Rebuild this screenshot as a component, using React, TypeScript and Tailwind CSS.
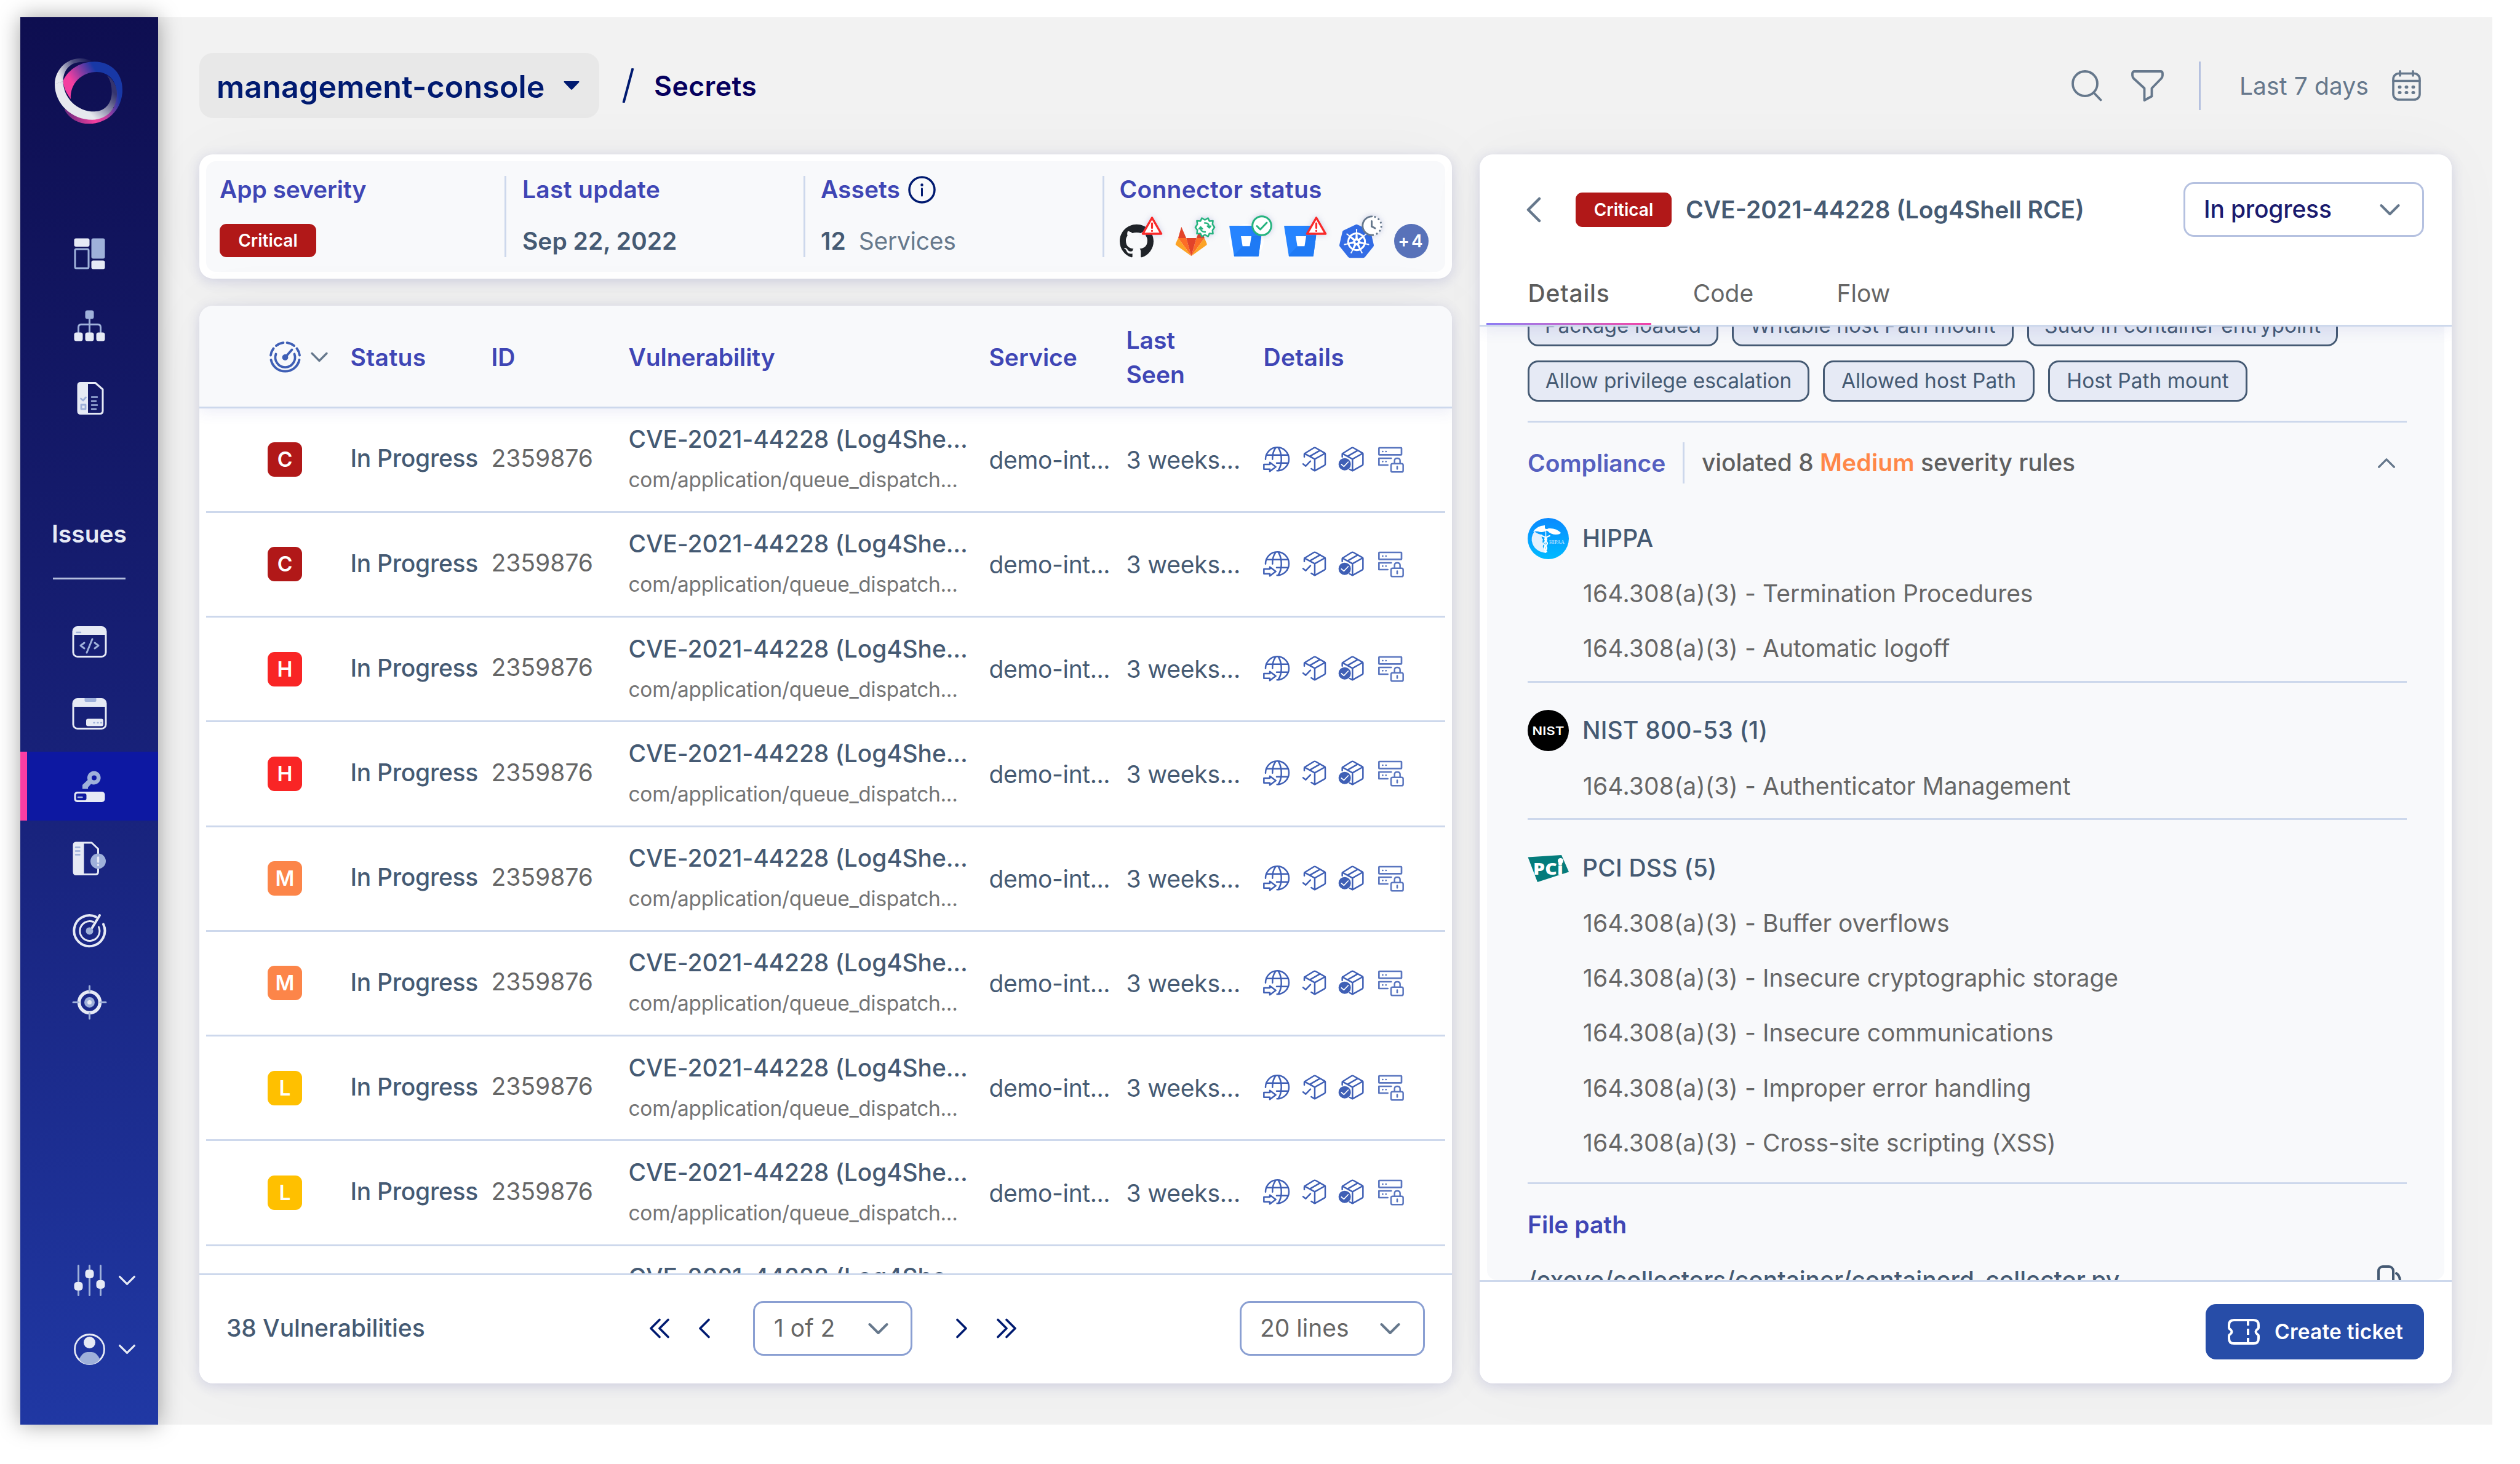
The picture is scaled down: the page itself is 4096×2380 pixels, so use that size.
import type { ReactNode } from "react";
import { SiGithub, SiKubernetes } from "react-icons/si";

const LIGHT = "#e6eaf5";
const SOFT = "#9fb1da";

/* ---------- Sidebar icons ---------- */

const Logo = () => (
  <svg className="w-[110px] h-[106px] -ml-[2px]" viewBox="57 44 330 318" fill="none">
    <defs>
      <linearGradient id="lgTop" gradientUnits="userSpaceOnUse" x1="125" y1="160" x2="250" y2="90">
        <stop offset="0.1" stopColor="#f43fa0" />
        <stop offset="1" stopColor="#1838a6" />
      </linearGradient>
      <linearGradient id="lgBottom" gradientUnits="userSpaceOnUse" x1="105" y1="300" x2="375" y2="250">
        <stop offset="0" stopColor="#6b2a80" />
        <stop offset="0.5" stopColor="#f43fa0" />
        <stop offset="0.7" stopColor="#c83f9f" />
        <stop offset="1" stopColor="#1838a6" />
      </linearGradient>
      <linearGradient id="lgWhiteTop" gradientUnits="userSpaceOnUse" x1="75" y1="120" x2="240" y2="55">
        <stop offset="0" stopColor="#e6e8ee" />
        <stop offset="0.5" stopColor="#e6e8ee" stopOpacity="0.3" />
        <stop offset="1" stopColor="#e6e8ee" stopOpacity="0" />
      </linearGradient>
      <linearGradient id="lgWhite" gradientUnits="userSpaceOnUse" x1="240" y1="325" x2="350" y2="215">
        <stop offset="0" stopColor="#e6e8ee" />
        <stop offset="0.75" stopColor="#5b5a86" />
        <stop offset="1" stopColor="#35346e" />
      </linearGradient>
    </defs>
    <path d="M98 152C125 95 185 60 250 60C335 60 387 120 387 195L386 215H358C360 150 315 110 262 110C190 110 130 165 135 242C115 215 98 185 98 152Z" fill="url(#lgTop)" />
    <path d="M387 195C387 295 315 363 222 363C165 363 120 330 103 290L235 335L345 285L358 200Z" fill="url(#lgBottom)" />
    <path d="M245 60C225 50 205 44 180 44C110 44 57 105 57 170L98 155C98 105 130 62 185 62Z" fill="url(#lgWhiteTop)" />
    <path d="M57 169C57 265 140 343 240 343C310 343 360 290 360 215C360 175 340 145 310 125C330 150 335 180 335 210C335 265 300 303 250 303C165 303 98 235 98 154Z" fill="url(#lgWhite)" />
  </svg>
);

const NavSvg = ({ children }: { children: ReactNode }) => (
  <svg className="size-[67px]" viewBox="0 0 67 67" fill="none" strokeLinecap="round" strokeLinejoin="round">
    {children}
  </svg>
);

const DashboardIcon = () => (
  <NavSvg>
    <rect x="8.5" y="8.5" width="25" height="13.5" rx="3" fill={LIGHT} />
    <rect x="10" y="26" width="22" height="31" rx="2" stroke={SOFT} strokeWidth="3" />
    <rect x="36.5" y="8.5" width="22" height="33" rx="3" fill={SOFT} />
    <rect x="36.5" y="44.5" width="22" height="14" rx="3" fill={LIGHT} />
  </NavSvg>
);

const TreeIcon = () => (
  <NavSvg>
    <path d="M33.5 20V46M15.5 46V36Q15.5 31.5 20 31.5H47Q51.5 31.5 51.5 36V46" stroke={SOFT} strokeWidth="3" />
    <rect x="26.5" y="8.5" width="14" height="14" rx="3.5" fill={SOFT} />
    <rect x="8.5" y="44.5" width="14" height="14" rx="3.5" fill={LIGHT} />
    <rect x="26.5" y="44.5" width="14" height="14" rx="3.5" fill={LIGHT} />
    <rect x="44.5" y="44.5" width="14" height="14" rx="3.5" fill={LIGHT} />
  </NavSvg>
);

const ReportIcon = () => (
  <NavSvg>
    <path d="M19 8.5H43L55 19V54Q55 58.5 50.5 58.5H19Q15 58.5 15 54V12.5Q15 8.5 19 8.5Z" stroke={LIGHT} strokeWidth="3" />
    <path d="M19 8H31V59H19Q14.5 59 14.5 54V12.5Q14.5 8 19 8Z" fill={LIGHT} />
    <path d="M19.5 34L23 37L27.5 32" stroke={SOFT} strokeWidth="2.8" />
    <rect x="20" y="44" width="7" height="7" stroke={SOFT} strokeWidth="2.8" />
    <path d="M37 31.5H46M37 38H44M37 44.5H46M37 51H44" stroke={SOFT} strokeWidth="2.5" />
  </NavSvg>
);

const CodeIcon = () => (
  <NavSvg>
    <rect x="7" y="9.5" width="53" height="48" rx="7" stroke={LIGHT} strokeWidth="3" />
    <path d="M7 22V16Q7 9.5 14 9.5H53Q60 9.5 60 16V22Z" fill={LIGHT} />
    <path d="M12.5 18H19" stroke={SOFT} strokeWidth="2.5" />
    <path d="M25 35L19 39.5L25 44M42 35L48 39.5L42 44M38 29L29 51" stroke={SOFT} strokeWidth="3" />
  </NavSvg>
);

const WindowIcon = () => (
  <NavSvg>
    <rect x="7" y="9.5" width="53" height="48" rx="7" stroke={LIGHT} strokeWidth="3" />
    <path d="M7 22V16Q7 9.5 14 9.5H53Q60 9.5 60 16V22Z" fill={LIGHT} />
    <path d="M25.5 8H44.5V12Q44.5 14 42.5 14H27.5Q25.5 14 25.5 12Z" fill={SOFT} />
    <rect x="28" y="41.5" width="28" height="12" rx="3" fill={LIGHT} />
    <path d="M40.5 48H41.5M46.5 48H47.5M52 48H53" stroke={SOFT} strokeWidth="2.5" />
  </NavSvg>
);

const KeyIcon = () => (
  <NavSvg>
    <path fillRule="evenodd" d="M41 8.5A11 11 0 1 1 36 29.5L31 35V37.5H22V31L30.5 23A11 11 0 0 1 41 8.5ZM41 15.5A4 4 0 1 0 41 23.5A4 4 0 1 0 41 15.5Z" fill={SOFT} />
    <rect x="8.5" y="42" width="50" height="17" rx="5" fill={LIGHT} />
    <rect x="11.5" y="45" width="17" height="11" rx="3" fill="#0f1aa0" />
    <path d="M15 51H21.5" stroke={SOFT} strokeWidth="2.5" />
  </NavSvg>
);

const FileAlertIcon = () => (
  <NavSvg>
    <path d="M12 8H37L47.5 18V55Q47.5 59.5 43 59.5H12Q8 59.5 8 55V12Q8 8 12 8Z" stroke={LIGHT} strokeWidth="3" />
    <path d="M12 7H24.5V60.5H12Q7 60.5 7 55V12Q7 7 12 7Z" fill={LIGHT} />
    <path d="M11 15.5H17.5M11 21.5H17.5M11 27.5H17.5" stroke={SOFT} strokeWidth="2.5" />
    <circle cx="47.5" cy="38" r="12.5" fill={SOFT} />
    <path d="M47.5 32V39M47.5 44V44.2" stroke={LIGHT} strokeWidth="3.5" />
  </NavSvg>
);

const RadarIcon = () => (
  <NavSvg>
    <path d="M44 11.5A25 25 0 1 0 56 23.5" stroke={LIGHT} strokeWidth="4" />
    <path d="M39.5 19.5A16 16 0 1 0 48.5 28" stroke={LIGHT} strokeWidth="3" />
    <circle cx="33.5" cy="34.5" r="6" fill={SOFT} />
    <path d="M38 29L50 9" stroke={LIGHT} strokeWidth="4" />
  </NavSvg>
);

const TargetIcon = () => (
  <NavSvg>
    <circle cx="33.5" cy="33.5" r="17" stroke={LIGHT} strokeWidth="5.5" />
    <circle cx="33.5" cy="33.5" r="8.5" fill={SOFT} />
    <circle cx="33.5" cy="33.5" r="3.5" fill={LIGHT} />
    <path d="M33.5 7V16M33.5 51V60M7 33.5H16M51 33.5H60" stroke={SOFT} strokeWidth="3" />
  </NavSvg>
);

const SlidersIcon = () => (
  <NavSvg>
    <path d="M15.5 9.5V57.5M33.5 9.5V57.5M51.5 9.5V57.5" stroke={SOFT} strokeWidth="3" />
    <rect x="8.5" y="36" width="14" height="14" rx="5" fill={LIGHT} />
    <rect x="26.5" y="16" width="14" height="14" rx="5" fill={LIGHT} />
    <rect x="44.5" y="33" width="14" height="14" rx="5" fill={LIGHT} />
  </NavSvg>
);

const UserIcon = () => (
  <NavSvg>
    <circle cx="33.5" cy="33.5" r="24" stroke={LIGHT} strokeWidth="2.8" />
    <path d="M16.5 50Q22 38 30 38H37Q45 38 50.5 50Q43 58.5 33.5 58.5Q24 58.5 16.5 50Z" fill={SOFT} />
    <circle cx="33.5" cy="22.5" r="9.5" fill={LIGHT} />
  </NavSvg>
);

const Chevron = ({ className }: { className: string }) => (
  <svg className={className} viewBox="0 0 32 20" fill="none" stroke="currentColor" strokeWidth="4" strokeLinecap="round" strokeLinejoin="round">
    <path d="M2 3L16 17L30 3" />
  </svg>
);

const navTop = [DashboardIcon, TreeIcon, ReportIcon];
const navIssues = [CodeIcon, WindowIcon, KeyIcon, FileAlertIcon, RadarIcon, TargetIcon];
const navBottom = [SlidersIcon, UserIcon];

const Sidebar = () => (
  <aside className="relative z-10 flex w-[224px] shrink-0 flex-col items-center bg-linear-[172deg,#0e0e50_0%,#18227b_55%,#2038a4_100%] pt-[67px] pb-[67px] shadow-[0_0_34px_rgba(0,0,0,0.36)]">
    <Logo />
    <nav className="mt-[156px] flex flex-col gap-[5.6px]">
      {navTop.map((Icon, i) => (
        <div key={i} className="flex h-[111.6px] items-center"><Icon /></div>
      ))}
    </nav>
    <div className="mt-[137px] text-[39px] leading-[56px] font-semibold text-[#e6eaf5]">Issues</div>
    <div className="mt-[43px] h-[3px] w-[118px] bg-[#b4bedd]" />
    <nav className="mt-[46px] flex w-full flex-col gap-[5.6px]">
      {navIssues.map((Icon, i) => (
        <div
          key={i}
          className={
            i === 2
              ? "flex h-[111.6px] items-center justify-center border-l-[11px] border-[#fb3da3] bg-[#0d18a2] pr-[11px]"
              : "flex h-[111.6px] items-center justify-center"
          }
        >
          <Icon />
        </div>
      ))}
    </nav>
    <nav className="mt-auto flex w-full flex-col">
      {navBottom.map((Icon, i) => (
        <div key={i} className="flex h-[111.6px] items-center pl-[78.5px] text-[#e6eaf5]">
          <Icon />
          <Chevron className="ml-[14px] h-[17px] w-[27px]" />
        </div>
      ))}
    </nav>
  </aside>
);

/* ---------- Top bar ---------- */

const TopBar = () => (
  <header className="flex h-[106px] items-center pr-[50px]">
    <div className="flex h-[106px] w-[650px] items-center rounded-[22px] bg-[#e8e8e8] pl-[28px] text-[50.2px] font-semibold text-[#001a70]">
      <span className="pt-[3px] tracking-[0.1px]">management-console</span>
      <svg className="ml-[30px] h-[14px] w-[26px]" viewBox="0 0 26 14" fill="currentColor">
        <path d="M1 0H25Q26 1 25 2L14 13.5Q13 14.2 12 13.5L1 2Q0 1 1 0Z" />
      </svg>
    </div>
    <svg className="ml-[37px] h-[56px] w-[20px]" viewBox="0 0 20 56" stroke="#001a70" strokeWidth="4">
      <path d="M17.5 0L2.5 56" />
    </svg>
    <span className="ml-[32px] pt-[2px] text-[44.6px] font-semibold tracking-[0.4px] text-[#06005e]">Secrets</span>

    <div className="ml-auto flex items-center text-[#66788c]">
      <svg className="h-[51px] w-[50px]" viewBox="0 0 50 51" fill="none" stroke="currentColor" strokeWidth="3.8" strokeLinecap="round">
        <circle cx="22" cy="22" r="20" />
        <path d="M36.5 37L47.5 48.5" />
      </svg>
      <svg className="ml-[47px] h-[51px] w-[53px]" viewBox="0 0 53 51" fill="none" stroke="currentColor" strokeWidth="3.8" strokeLinejoin="round">
        <path d="M5.5 2H47.5Q51 2 51 5.5V8.5Q51 11 49 13.5L33.5 29.5V42.5L21.5 49V29.5L4 13.5Q2 11 2 8.5V5.5Q2 2 5.5 2Z" />
      </svg>
      <div className="ml-[57px] h-[79px] w-[3px] bg-[#b5c1e0]" />
      <span className="ml-[63px] pt-[2px] text-[39px] tracking-[0.1px]">Last 7 days</span>
      <svg className="ml-[38px] h-[50px] w-[47px]" viewBox="0 0 47 50" fill="none" stroke="currentColor" strokeWidth="3.6" strokeLinecap="round">
        <rect x="2" y="5.5" width="43" height="42.5" rx="9" />
        <path d="M2 17.5H45M13 1.8V9M34 1.8V9" />
        <path d="M12 27.5H13M23 27.5H24M34 27.5H35M12 36.5H13M23 36.5H24M34 36.5H35" strokeWidth="5" />
      </svg>
    </div>
  </header>
);

/* ---------- Summary card ---------- */

const WarnBadge = () => (
  <svg className="absolute -top-[13px] left-[35px] h-[32px] w-[35px] drop-shadow-[0_0_5px_rgba(60,70,160,0.25)]" viewBox="0 0 35 32" strokeLinejoin="round" strokeLinecap="round">
    <path d="M17.5 3L32.5 29H2.5Z" fill="#fff" stroke="#f92a2a" strokeWidth="3.5" />
    <path d="M17.5 12V19.5M17.5 24.2V24.4" stroke="#f92a2a" strokeWidth="3.2" />
  </svg>
);

const SyncBadge = () => (
  <svg className="absolute -top-[12px] left-[32px] size-[35px] drop-shadow-[0_0_5px_rgba(60,70,160,0.25)]" viewBox="0 0 35 35" fill="none" stroke="#26b47f" strokeWidth="2.6" strokeLinecap="round" strokeLinejoin="round">
    <path
      d="M12.5 2.5L17.5 5.5L22.5 2.5L24.8 7.5L30.5 7L29.8 12.6L33 17.5L29.8 22.4L30.5 28L24.8 27.500L22.5 32.500L17.5 29.500L12.5 32.500L10.2 27.500L4.5 28L5.200 22.4L2 17.500L5.200 12.600L4.500 7L10.200 7.500Z"
      fill="#fff"
    />
    <path d="M17 10.500C22 10 24.500 13 24.500 17.500M21.500 15.500L24.500 18.500L27 15.500" strokeWidth="2.400" />
    <path d="M18 25C13 25.500 10.500 22.500 10.500 18M8 20L10.500 17L13.500 20" strokeWidth="2.400" />
  </svg>
);

const OkBadge = () => (
  <svg className="absolute -top-[14px] left-[36px] size-[34px] drop-shadow-[0_0_5px_rgba(60,70,160,0.25)]" viewBox="0 0 34 34" fill="none" stroke="#26b47f" strokeWidth="3" strokeLinecap="round" strokeLinejoin="round">
    <circle cx="17" cy="17" r="15.3" fill="#fff" />
    <path d="M9 17.5L14.5 23L25 12" />
  </svg>
);

const ClockBadge = () => (
  <svg className="absolute -top-[14px] left-[36px] size-[34px] drop-shadow-[0_0_5px_rgba(60,70,160,0.25)]" viewBox="0 0 34 34" fill="none" stroke="#66788c" strokeWidth="2.8" strokeLinecap="round">
    <circle cx="17" cy="17" r="16" fill="#fff" stroke="none" />
    <path d="M17 1.8A15.2 15.2 0 0 0 17 32.2" />
    <path d="M17 1.8A15.2 15.2 0 0 1 17 32.2" strokeDasharray="0.1 6.7" strokeDashoffset="-5" strokeWidth="3.2" />
    <path d="M16.5 9.5V18L22 21" strokeWidth="3" />
  </svg>
);

const GitlabLogo = () => (
  <svg className="size-[56px]" viewBox="0 0 56 56">
    <path d="M11.2 4.7L6 23H19.1ZM43.5 4.7L48.7 23H35.6Z" fill="#e24329" />
    <path d="M6 23L27.4 52.3L19.1 23ZM48.7 23L27.4 52.3L35.6 23Z" fill="#fc6d26" />
    <path d="M6 23L1.9 32Q1.4 33.5 2.5 34.5L27.4 52.3ZM48.7 23L52.5 32Q53 33.5 52 34.5L27.4 52.3Z" fill="#fca326" />
    <path d="M19.1 23H35.6L27.4 52.3Z" fill="#e24329" />
  </svg>
);

const BitbucketLogo = () => (
  <svg className="size-[56px]" viewBox="0 0 56 56">
    <path d="M1 3H53.5Q54.5 3 54.3 4L47.8 52Q47.6 53 46.6 53H9Q8 53 7.8 52L0.2 4Q0 3 1 3Z" fill="#2684ff" />
    <path d="M21.7 36.3H33.4L36 20H52.1L47.8 52Q47.6 53 46.6 53H9Q8 53 7.8 51Z" fill="#1f7af5" />
    <path d="M19 20H36L33.4 36.3H21.7Z" fill="#fff" />
  </svg>
);

const ConnectorStatus = () => (
  <div className="flex h-[56px] items-center gap-[33.3px]">
    <div className="relative size-[56px]">
      <SiGithub className="size-[55px] text-[#1f2328]" />
      <WarnBadge />
    </div>
    <div className="relative size-[56px]">
      <GitlabLogo />
      <SyncBadge />
    </div>
    <div className="relative size-[56px] rounded-full bg-white">
      <BitbucketLogo />
      <OkBadge />
    </div>
    <div className="relative size-[56px]">
      <BitbucketLogo />
      <WarnBadge />
    </div>
    <div className="relative flex size-[56px] items-center justify-center">
      <div className="absolute inset-[9px] rounded-full bg-white" />
      <SiKubernetes className="relative size-[56px] text-[#326ce5]" />
      <ClockBadge />
    </div>
    <div className="flex size-[56px] items-center justify-center rounded-full bg-[#5872b9] text-[28px] font-semibold tracking-[3px] text-white">+4</div>
  </div>
);

const SummaryCard = () => (
  <section className="h-[201.5px] rounded-[22px] bg-white p-[11px] shadow-[0_4px_20px_rgba(60,65,160,0.18),0_0_110px_rgba(0,0,0,0.035)]">
    <div className="flex h-full rounded-[16px] bg-[#f8f9fb] py-[24px] pl-[22px] text-[39px] font-semibold text-[#455a73]">
      <div className="flex w-[463px] flex-col gap-[34px]">
        <span className="h-[44px] leading-[44px] tracking-[-0.1px] text-[#3f46b5]">App severity</span>
        <span className="flex h-[56px] w-[157px] items-center justify-center rounded-[11px] bg-[#b11818] text-[28px] text-white">Critical</span>
      </div>
      <div className="flex w-[486px] flex-col gap-[34px] border-l-[3px] border-[#cdd8ec] pl-[26px]">
        <span className="h-[44px] leading-[44px] tracking-[0.3px] text-[#3f46b5]">Last update</span>
        <span className="leading-[56px]">Sep 22, 2022</span>
      </div>
      <div className="flex w-[485.5px] flex-col gap-[34px] border-l-[3px] border-[#cdd8ec] pl-[25px]">
        <span className="flex h-[44px] items-center leading-[44px] text-[#3f46b5]">
          Assets
          <svg className="ml-[13px] size-[45px]" viewBox="0 0 45 45" fill="none" stroke="#001a70" strokeWidth="3.5" strokeLinecap="round">
            <circle cx="22.5" cy="22.5" r="20.5" />
            <path d="M22.5 20.5V32" strokeWidth="3" />
            <path d="M22.5 14.5V14.7" strokeWidth="4.5" />
          </svg>
        </span>
        <span className="leading-[56px]">12<span className="ml-[21px] font-normal tracking-[-0.3px] text-[#66788c]">Services</span></span>
      </div>
      <div className="flex flex-col gap-[34px] border-l-[3px] border-[#cdd8ec] pl-[25px]">
        <span className="h-[44px] leading-[44px] tracking-[0.25px] text-[#3f46b5]">Connector status</span>
        <ConnectorStatus />
      </div>
    </div>
  </section>
);

/* ---------- Vulnerabilities table ---------- */

const SeverityIcon = () => (
  <svg className="size-[51px]" viewBox="0 0 51 51" fill="none" stroke="#3f5fb5" strokeWidth="3.8" strokeLinecap="round">
    <path d="M2.5 30A23.5 23.5 0 0 0 48.5 30" />
    <path d="M2 22.5A23.5 23.5 0 0 1 6.5 11.5M49 22.5A23.5 23.5 0 0 0 44.5 11.5M11 7A23.5 23.5 0 0 1 22.5 2.2M40 7A23.5 23.5 0 0 0 28.5 2.2" />
    <path d="M10.5 20.5A16 16 0 1 0 40.5 20.5" />
    <circle cx="25.5" cy="26" r="3" fill="#3f5fb5" />
    <path d="M25.5 26L36.5 13.5" />
  </svg>
);

const DetailIcons = () => (
  <div className="flex gap-[17px] [&>svg]:h-[45px] [&>svg]:w-[45px] [&>svg]:overflow-visible">
    <svg viewBox="157 199 135 135" fill="none" stroke="#3f5fb5" strokeWidth="7.5" strokeLinecap="round" strokeLinejoin="round">
      <path d="M172 264A57 57 0 1 1 228 320" />
      <path d="M176 243H282M226 282H278M206 264C205 242 211 222 221 208M235 208C254 240 254 290 234 319" />
      <path d="M164 289H193V279L222 301L193 323V312H164Z" />
    </svg>
    <svg viewBox="343 199 135 135" fill="none" stroke="#3f5fb5" strokeWidth="7.5" strokeLinecap="round" strokeLinejoin="round">
      <path d="M361 252V240Q361 237 364 235L408 208Q412 206 416 208L460 233Q463 235 463 238V288Q463 291 460 293L416 318Q412 321 408 318L395 310" />
      <path d="M362 236L412 263L462 235M412 263V319M390 248L437 221" />
      <path d="M355 287L368 297L391 273" />
    </svg>
    <svg viewBox="529 199 135 135" fill="none" stroke="#3f5fb5" strokeWidth="7.5" strokeLinecap="round" strokeLinejoin="round">
      <path d="M546 252V240Q546 237 549 235L592 208Q596 206 600 208L644 233Q647 235 647 238V288Q647 291 644 293L600 318Q596 321 592 318L582 313" />
      <path d="M547 236L596 263L646 235M596 263V319M574 248L621 221" />
      <circle cx="558" cy="288" r="30" fill="#3f5fb5" stroke="none" />
      <path d="M542 289L554 299L575 277" stroke="#fff" strokeWidth="5" />
    </svg>
    <svg viewBox="715 199 135 135" fill="none" stroke="#5a76bf" strokeWidth="8" strokeLinecap="round" strokeLinejoin="round">
      <rect x="725" y="208" width="110" height="34" rx="2" />
      <path d="M785 259H725V292H768" />
      <path d="M743 226H743.5M759 226H759.5M743 275H743.5M759 275H759.5" />
      <rect x="784" y="285" width="59" height="41" rx="8" strokeWidth="7.5" />
      <path d="M801 284V271Q801 259 814 259Q828 259 828 271V284" strokeWidth="7.5" />
      <path d="M814 300V311" />
    </svg>
  </div>
);

const severityColors: Record<string, string> = {
  C: "bg-[#b11818]",
  H: "bg-[#f92525]",
  M: "bg-[#fc8549]",
  L: "bg-[#ffc000]",
};

const rows = ["C", "C", "H", "H", "M", "M", "L", "L", "L"];

const TableRow = ({ level }: { level: string }) => (
  <div className="mx-[11px] grid h-[170.25px] shrink-0 grid-cols-[134.5px_229px_223px_586px_223px_221.5px_1fr] items-center border-b-[3px] border-[#cdd8ec] pl-[100px] text-[39px] whitespace-nowrap text-[#455a73]">
    <span className={`flex size-[56px] items-center justify-center rounded-[11px] text-[33.5px] font-semibold text-white ${severityColors[level]}`}>{level}</span>
    <span className="pb-[3px] font-medium tracking-[-0.3px]">In Progress</span>
    <span className="pb-[4px] text-[#666]">2359876</span>
    <span className="flex flex-col leading-[67px]">
      <span className="font-medium tracking-[-0.16px]">CVE-2021-44228 (Log4She...</span>
      <span className="text-[33.5px] tracking-[-0.3px] text-[#757575]">com/application/queue_dispatch...</span>
    </span>
    <span className="pt-[2px] tracking-[-0.4px]">demo-int...</span>
    <span className="pt-[2px] tracking-[-0.2px]">3 weeks...</span>
    <DetailIcons />
  </div>
);

const PageArrow = ({ double, flip }: { double?: boolean; flip?: boolean }) => (
  <svg
    className={`h-[33px] ${double ? "w-[32px]" : "w-[18px]"} ${flip ? "-scale-x-100" : ""}`}
    viewBox={double ? "0 0 32 33" : "0 0 18 33"}
    fill="none"
    stroke="#001a70"
    strokeWidth="3.6"
    strokeLinecap="round"
    strokeLinejoin="round"
  >
    <path d="M16 2.5L2 16.5L16 30.5" />
    {double && <path d="M30 2.5L16 16.5L30 30.5" />}
  </svg>
);

const VulnerabilityTable = () => (
  <section className="mt-[44.5px] flex flex-1 flex-col overflow-hidden rounded-[22px] bg-white shadow-[0_4px_20px_rgba(60,65,160,0.18),0_0_110px_rgba(0,0,0,0.035)]">
    <div className="relative z-10 grid h-[166.5px] shrink-0 grid-cols-[134.5px_229px_223px_586px_223px_223px_1fr] items-center border-b-[3px] border-[#cdd8ec] bg-[#f8f9fb] pt-[4px] pl-[111px] text-[39px] leading-[56px] font-semibold text-[#3f46b5] shadow-[0_4px_24px_rgba(60,65,180,0.1)]">
      <span className="flex items-center pl-[3px] text-[#66788c]">
        <SeverityIcon />
        <Chevron className="ml-[16px] h-[17px] w-[28px]" />
      </span>
      <span className="tracking-[0.4px]">Status</span>
      <span>ID</span>
      <span className="tracking-[-0.1px]">Vulnerability</span>
      <span>Service</span>
      <span>Last<br />Seen</span>
      <span className="tracking-[0.3px]">Details</span>
    </div>
    <div className="flex min-h-0 flex-1 flex-col overflow-hidden">
      {rows.map((level, i) => (
        <TableRow key={i} level={level} />
      ))}
    </div>
    <div className="relative flex h-[179px] shrink-0 items-center border-t-[3px] border-[#cdd8ec] bg-white pr-[44px] pb-[3px] pl-[44px] text-[39px] text-[#666]">
      <span className="w-[688px] font-medium tracking-[-0.1px] text-[#455a73]">38 Vulnerabilities</span>
      <PageArrow double />
      <span className="w-[48px]" />
      <PageArrow />
      <div className="ml-[70px] flex h-[89px] w-[259px] items-center rounded-[17px] border-[3px] border-[#8a9fd2] pl-[31px]">
        1 of 2
        <Chevron className="ml-auto mr-[36px] h-[20px] w-[33px] text-[#66788c]" />
      </div>
      <span className="w-[71px]" />
      <PageArrow flip />
      <span className="w-[48px]" />
      <PageArrow double flip />
      <div className="ml-auto flex h-[89px] w-[301px] items-center rounded-[17px] border-[3px] border-[#8a9fd2] pl-[30px]">
        20 lines
        <Chevron className="ml-auto mr-[37px] h-[20px] w-[33px] text-[#66788c]" />
      </div>
    </div>
  </section>
);

/* ---------- Details panel ---------- */

const HipaaLogo = () => (
  <svg className="size-[67px]" viewBox="0 0 67 67" fill="none" strokeLinecap="round">
    <defs>
      <linearGradient id="hipaa" x1="0" y1="0" x2="0" y2="1">
        <stop offset="0" stopColor="#0a8aff" />
        <stop offset="1" stopColor="#00baff" />
      </linearGradient>
    </defs>
    <circle cx="33.5" cy="33.5" r="33.5" fill="url(#hipaa)" />
    {/* crescent */}
    <path d="M11 22Q4 32 8 42Q13 55 30 57L27 51Q23 47 26 43Q23 39 25 35Q21 31 24 27Q17 27 11 22Z" fill="#e4f1fd" />
    {/* wings and staff */}
    <path d="M9 23Q14 13 28 12V17Q31 19 34 17Q46 16 54 24Q53 27 46 27Q38 27 32 21Q30 20 28 22Q22 24 17 22Q12 21 9 23Z" fill="#fff" />
    <path d="M23 29Q35 33 29 38Q23 42 30 46Q33 50 28 55M36 29Q24 33 30 38Q35 42 28 46Q25 50 31 55" stroke="#fff" strokeWidth="2" />
    <path d="M29.5 22V56" stroke="#fff" strokeWidth="1.5" />
    <text x="35" y="42" fontFamily="Liberation Serif, serif" fontSize="9" textLength="25" lengthAdjust="spacingAndGlyphs" fill="#dff1ff">HIPAA</text>
  </svg>
);

const NistLogo = () => (
  <svg className="size-[67px]" viewBox="0 0 67 67">
    <circle cx="33.5" cy="33.5" r="33.5" fill="#000" />
    <text x="7.5" y="40.5" fontFamily="Inter, sans-serif" fontWeight="600" fontSize="19" textLength="52" lengthAdjust="spacingAndGlyphs" fill="#fff">NIST</text>
  </svg>
);

const PciLogo = () => (
  <svg className="size-[67px]" viewBox="0 0 67 67">
    <path d="M0.5 16.5L55 13L67 40.5L16 57Z" fill="#047c7c" />
    <text x="9" y="45" fontFamily="Open Sans, sans-serif" fontWeight="800" fontSize="26" textLength="49" lengthAdjust="spacingAndGlyphs" fill="#fff">PCi</text>
    <circle cx="53.5" cy="22.5" r="4.5" fill="#fff" />
  </svg>
);

const Tag = ({ label, className }: { label: string; className: string }) => (
  <span className={`flex h-[67px] items-center justify-center rounded-[17px] border-[3px] border-[#455a73] bg-[#e6eaf5] text-[33.5px] whitespace-nowrap text-[#455a73] ${className}`}>
    {label}
  </span>
);

type Framework = { name: string; logo: ReactNode; rules: string[] };

const frameworks: Framework[] = [
  { name: "HIPPA", logo: <HipaaLogo />, rules: ["Termination Procedures", "Automatic logoff"] },
  { name: "NIST 800-53 (1)", logo: <NistLogo />, rules: ["Authenticator Management"] },
  {
    name: "PCI DSS (5)",
    logo: <PciLogo />,
    rules: ["Buffer overflows", "Insecure cryptographic storage", "Insecure communications", "Improper error handling", "Cross-site scripting (XSS)"],
  },
];

const DetailsPanel = () => (
  <section className="flex w-[1580px] flex-col overflow-hidden rounded-[22px] bg-white text-[39px] shadow-[0_4px_20px_rgba(60,65,160,0.18),0_0_110px_rgba(0,0,0,0.035)]">
    <div className="relative z-10 flex h-[279.5px] shrink-0 flex-col border-b-[3px] border-[#cdd8ec] bg-white shadow-[0_4px_24px_rgba(60,65,180,0.1)]">
      <div className="mt-[45px] flex h-[89px] items-center pr-[45px] pl-[76px]">
        <svg className="h-[42px] w-[24px]" viewBox="0 0 24 42" fill="none" stroke="#66788c" strokeWidth="4.5" strokeLinecap="round" strokeLinejoin="round">
          <path d="M21 3L3 21L21 39" />
        </svg>
        <span className="ml-[56px] flex h-[56px] w-[156px] items-center justify-center rounded-[11px] bg-[#b11818] text-[28px] font-semibold text-white">Critical</span>
        <span className="ml-[23px] pt-[1px] font-semibold text-[#455a73]">CVE-2021-44228 (Log4Shell RCE)</span>
        <div className="ml-auto flex h-[89px] w-[391px] items-center rounded-[17px] border-[3px] border-[#b5c1e0] pl-[30px] font-medium tracking-[-0.2px] text-[#1a1a6e]">
          In progress
          <Chevron className="ml-auto mr-[36px] h-[20px] w-[33px] text-[#66788c]" />
        </div>
      </div>
      <div className="mt-auto flex pl-[11px] text-center text-[#5c5c5c]">
        <div className="relative h-[102px] w-[268px] leading-[102px] font-medium tracking-[0.8px]">
          Details
          <div className="absolute inset-x-0 bottom-0 h-[3px] bg-linear-to-r from-[#8a7bf5] to-[#f23ea6]" />
        </div>
        <div className="w-[234px] leading-[102px] text-[#666]">Code</div>
        <div className="w-[222px] leading-[102px] text-[#666]">Flow</div>
      </div>
    </div>

    <div className="mr-[12px] ml-[12px] flex min-h-0 flex-1 flex-col overflow-hidden rounded-b-[16px] bg-[#f8f9fb] pr-[61px] pl-[66px]">
      <div className="-mt-[34.5px] flex shrink-0 gap-[22px]">
        <Tag label="Package loaded" className="w-[310px]" />
        <Tag label="Writable host Path mount" className="w-[458px]" />
        <Tag label="Sudo in container entrypoint" className="w-[505px]" />
      </div>
      <div className="mt-[23px] flex shrink-0 gap-[22px]">
        <Tag label="Allow privilege escalation" className="w-[458px] tracking-[-0.1px]" />
        <Tag label="Allowed host Path" className="w-[344px]" />
        <Tag label="Host Path mount" className="w-[324px]" />
      </div>
      <div className="mt-[31px] h-[3px] shrink-0 bg-[#cdd8ec]" />
      <div className="mt-[32px] flex h-[67px] shrink-0 items-center font-medium text-[#5f5f5f]">
        <span className="w-[255px] border-r-[3px] border-[#cdd8ec] leading-[67px] font-semibold text-[#5560c0]">Compliance</span>
        <span className="ml-[28px] whitespace-pre tracking-[-0.1px]">violated 8 <span className="font-semibold tracking-[0.2px] text-[#ff8748]">Medium</span> severity rules</span>
        <Chevron className="mr-[19px] ml-auto h-[18px] w-[28px] rotate-180 text-[#66788c]" />
      </div>
      <div className="h-[11px] shrink-0" />
      {frameworks.map((fw, i) => (
        <div key={fw.name} className="shrink-0">
          {i > 0 && <div className="mt-[8px] h-[3px] bg-[#cdd8ec]" />}
          <div className="mt-[44.5px] flex items-center gap-[22px] font-medium tracking-[0.2px] text-[#455a73]">
            {fw.logo}
            {fw.name}
          </div>
          <ul className="pt-[11.5px] pl-[90px] text-[#666]">
            {fw.rules.map((rule) => (
              <li key={rule} className="h-[89.3px] leading-[89.3px] tracking-[-0.03px]">
                <span className="tracking-[0.15px]">164.308(a)(3) - </span>
                {rule}
              </li>
            ))}
          </ul>
        </div>
      ))}
      <div className="mt-[20px] h-[3px] shrink-0 bg-[#cdd8ec]" />
      <div className="mt-[38px] shrink-0 leading-[56px] font-semibold text-[#3f46b5]">File path</div>
      <div className="mt-[34px] flex shrink-0 items-start justify-between pr-[9px] leading-[56px] font-medium text-[#455a73]">
        /exeye/collectors/container/containerd_collector.py
        <svg className="mt-[4px] h-[48px] w-[39px]" viewBox="0 0 39 48" fill="none" stroke="currentColor" strokeWidth="4" strokeLinecap="round">
          <rect x="2" y="2" width="24" height="34" rx="7" />
          <path d="M31 13Q37 17 37 26V36Q37 45 28 45H16" />
        </svg>
      </div>
    </div>

    <div className="flex h-[168px] shrink-0 items-center justify-end border-t-[3px] border-[#cdd8ec] bg-white pr-[45px] pb-[3px]">
      <button className="flex h-[90px] w-[355px] items-center rounded-[17px] bg-[#274da8] pl-[36px] text-[33.5px] font-semibold tracking-[0.2px] text-white">
        <svg className="h-[42px] w-[52px]" viewBox="0 0 52 42" fill="none" stroke="currentColor" strokeWidth="4" strokeLinejoin="round">
          <path d="M10 2H42Q50 2 50 10V14Q50 16 48 17Q43 21 48 25Q50 26 50 28V32Q50 40 42 40H10Q2 40 2 32V28Q2 26 4 25Q9 21 4 17Q2 16 2 14V10Q2 2 10 2Z" />
          <path d="M33 2V11M33 16V26M33 31V40" />
        </svg>
        <span className="ml-[24px]">Create ticket</span>
      </button>
    </div>
  </section>
);

const App = () => {
  return (
    <div className="h-[2380px] w-[4096px] bg-white pt-[28px] pl-[33px] font-['Inter',sans-serif]">
      <div className="flex h-[2288px] w-[4018px] bg-[#f2f2f2]">
        <Sidebar />
        <main className="flex min-w-0 flex-1 flex-col overflow-hidden pt-[58px] pr-[66px] pb-[67px] pl-[67px]">
          <TopBar />
          <div className="mt-[59px] flex min-h-0 flex-1 gap-[45px]">
            <div className="flex w-[2036px] flex-col">
              <SummaryCard />
              <VulnerabilityTable />
            </div>
            <DetailsPanel />
          </div>
        </main>
      </div>
    </div>
  );
};

export default App;
